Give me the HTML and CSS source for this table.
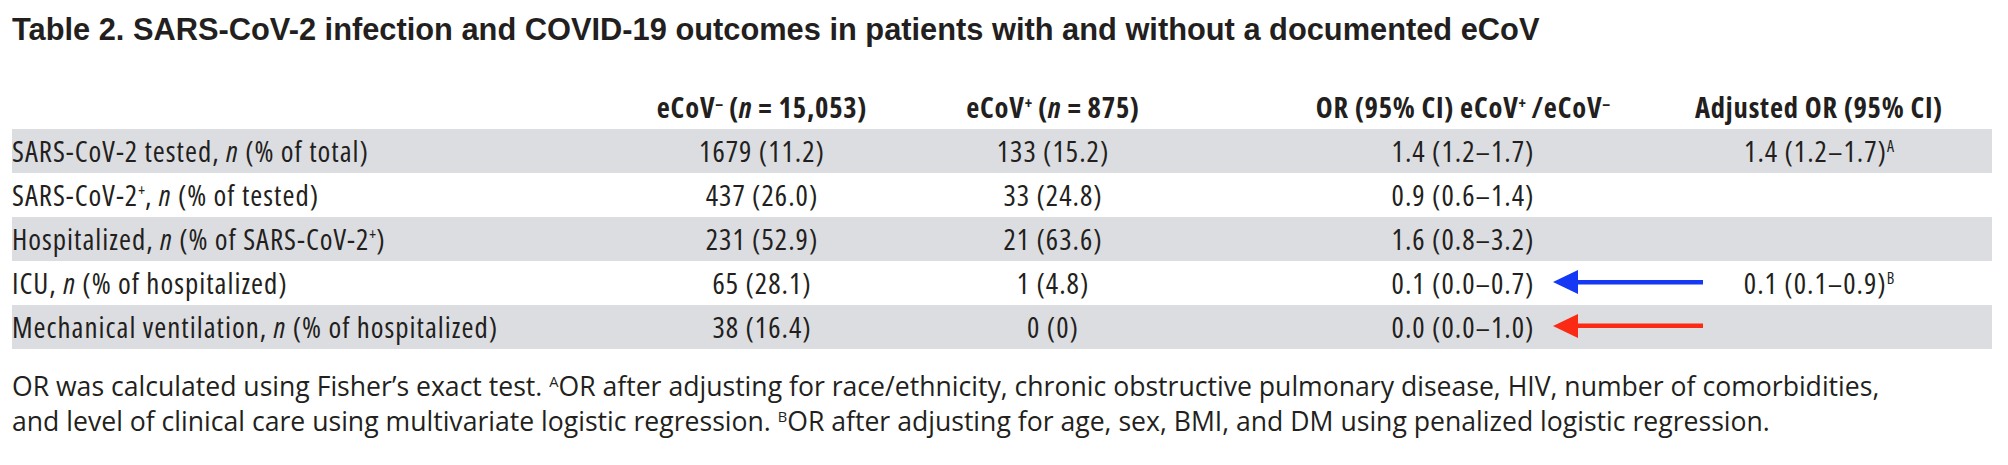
FILE: index.html
```html
<!DOCTYPE html>
<html lang="en">
<head>
<meta charset="utf-8">
<title>Table 2</title>
<link rel="stylesheet" href="styles.css">
</head>
<body>
<div class="page">
  <h1 class="title">Table 2. SARS-CoV-2 infection and COVID-19 outcomes in patients with and without a documented eCoV</h1>
  <div class="table">
    <div class="row head">
      <div class="cell label"><span></span></div>
      <div class="cell"><span>eCoV<sup>–</sup> (<i>n</i> = 15,053)</span></div>
      <div class="cell"><span>eCoV<sup>+</sup> (<i>n</i> = 875)</span></div>
      <div class="cell"><span>OR (95% CI) eCoV<sup>+</sup>&thinsp;/eCoV<sup>–</sup></span></div>
      <div class="cell"><span>Adjusted OR (95% CI)</span></div>
      <div class="cell"></div>
    </div>
    <div class="row band">
      <div class="cell label"><span>SARS-CoV-2 tested, <i>n</i> (% of total)</span></div>
      <div class="cell"><span>1679 (11.2)</span></div>
      <div class="cell"><span>133 (15.2)</span></div>
      <div class="cell"><span>1.4 (1.2–1.7)</span></div>
      <div class="cell"><span>1.4 (1.2–1.7)<sup>A</sup></span></div>
      <div class="cell"></div>
    </div>
    <div class="row">
      <div class="cell label"><span>SARS-CoV-2<sup>+</sup>, <i>n</i> (% of tested)</span></div>
      <div class="cell"><span>437 (26.0)</span></div>
      <div class="cell"><span>33 (24.8)</span></div>
      <div class="cell"><span>0.9 (0.6–1.4)</span></div>
      <div class="cell"></div>
      <div class="cell"></div>
    </div>
    <div class="row band">
      <div class="cell label"><span>Hospitalized, <i>n</i> (% of SARS-CoV-2<sup>+</sup>)</span></div>
      <div class="cell"><span>231 (52.9)</span></div>
      <div class="cell"><span>21 (63.6)</span></div>
      <div class="cell"><span>1.6 (0.8–3.2)</span></div>
      <div class="cell"></div>
      <div class="cell"></div>
    </div>
    <div class="row">
      <div class="cell label"><span>ICU, <i>n</i> (% of hospitalized)</span></div>
      <div class="cell"><span>65 (28.1)</span></div>
      <div class="cell"><span>1 (4.8)</span></div>
      <div class="cell"><span>0.1 (0.0–0.7)</span></div>
      <div class="cell"><span>0.1 (0.1–0.9)<sup>B</sup></span></div>
      <div class="cell"></div>
      <svg class="arrow" width="150" height="24" viewBox="0 0 150 24" aria-hidden="true">
        <polygon class="blue" points="0,12 25,0 25,24"/>
        <rect class="blue" x="24" y="10" width="126" height="4.5"/>
      </svg>
    </div>
    <div class="row band">
      <div class="cell label"><span>Mechanical ventilation, <i>n</i> (% of hospitalized)</span></div>
      <div class="cell"><span>38 (16.4)</span></div>
      <div class="cell"><span>0 (0)</span></div>
      <div class="cell"><span>0.0 (0.0–1.0)</span></div>
      <div class="cell"></div>
      <div class="cell"></div>
      <svg class="arrow" width="150" height="24" viewBox="0 0 150 24" aria-hidden="true">
        <polygon class="red" points="0,12 25,0 25,24"/>
        <rect class="red" x="24" y="9.5" width="126" height="4.5"/>
      </svg>
    </div>
  </div>
  <p class="note">OR was calculated using Fisher’s exact test. <sup>A</sup>OR after adjusting for race/ethnicity, chronic obstructive pulmonary disease, HIV, number of comorbidities,<br>and level of clinical care using multivariate logistic regression. <sup>B</sup>OR after adjusting for age, sex, BMI, and DM using penalized logistic regression.</p>
</div>
</body>
</html>
```

FILE: styles.css
```css
body {
  margin: 0;
  background: #ffffff;
  color: #231f20;
}

.page {
  padding: 12px 16px 0 12px;
}

.title {
  margin: 0;
  font-family: "Liberation Sans", Arial, sans-serif;
  font-weight: bold;
  font-size: 30.8px;
  line-height: 35px;
}

.table {
  margin-top: 38px;
}

.row {
  position: relative;
  display: grid;
  grid-template-columns: 636px 228px 354px 466px 246px 50px;
  box-sizing: border-box;
  height: 44px;
  font-family: "Open Sans", "Liberation Sans", sans-serif;
  font-stretch: 75%;
  font-size: 29px;
  letter-spacing: 1px;
  line-height: 44px;
}

.row.head {
  font-weight: bold;
  font-size: 28.5px;
  letter-spacing: 0.8px;
}

.band {
  background: #dcdde0;
}

.cell {
  display: flex;
  justify-content: center;
  white-space: nowrap;
}

.cell.label {
  justify-content: flex-start;
}

sup {
  font-size: 0.55em;
  line-height: 0;
  vertical-align: 0.6em;
  letter-spacing: 0;
}

.arrow {
  position: absolute;
  left: 1541px;
  top: 9px;
}

.blue {
  fill: #1438f4;
}

.red {
  fill: #fb2a14;
}

.note {
  margin: 20px 0 0;
  font-family: "Open Sans", "Liberation Sans", sans-serif;
  font-size: 26.6px;
  line-height: 35px;
  white-space: nowrap;
}
```
